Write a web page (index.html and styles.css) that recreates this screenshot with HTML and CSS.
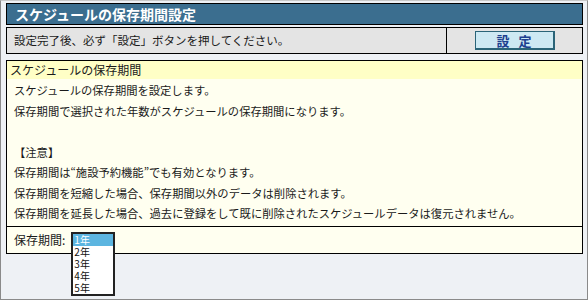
FILE: index.html
```html
<!DOCTYPE html>
<html lang="ja">
<head>
<meta charset="utf-8">
<title>スケジュールの保存期間設定</title>
<link rel="stylesheet" href="styles.css">
</head>
<body>
<div class="page">
  <h1 class="title">スケジュールの保存期間設定</h1>
  <div class="actionbar">
    <div class="note">設定完了後、必ず「設定」ボタンを押してください。</div>
    <div class="btncell"><button class="btn">設 定</button></div>
  </div>
  <div class="section">
    <div class="section-head">スケジュールの保存期間</div>
    <div class="section-body">
      <p>スケジュールの保存期間を設定します。</p>
      <p>保存期間で選択された年数がスケジュールの保存期間になります。</p>
      <p>&nbsp;</p>
      <p>【注意】</p>
      <p>保存期間は“施設予約機能”でも有効となります。</p>
      <p>保存期間を短縮した場合、保存期間以外のデータは削除されます。</p>
      <p>保存期間を延長した場合、過去に登録をして既に削除されたスケジュールデータは復元されません。</p>
    </div>
    <div class="section-foot">
      <span class="label">保存期間:</span>
      <div class="select-wrap">
        <ul class="listbox">
          <li class="selected">1年</li>
          <li>2年</li>
          <li>3年</li>
          <li>4年</li>
          <li>5年</li>
        </ul>
      </div>
    </div>
  </div>
</div>
</body>
</html>
```
FILE: styles.css
```css
html, body {
  margin: 0;
  padding: 0;
}
body {
  font-family: "Noto Sans CJK JP", "Noto Sans", sans-serif;
  font-size: 12px;
  color: #1a1a1a;
}
.page {
  box-sizing: border-box;
  width: 588px;
  height: 300px;
  background: #eef1f5;
  border-left: 1px solid #8a8a8a;
  border-right: 1px solid #8a8a8a;
  border-bottom: 1px solid #8a8a8a;
  border-top: 1px solid #c8c8c8;
  padding: 2px 4px 0 5px;
}
.title {
  margin: 0;
  box-sizing: border-box;
  height: 22px;
  border: 1px solid #000;
  background: #3b6e8f;
  color: #fff;
  font-size: 14px;
  font-weight: bold;
  line-height: 20px;
  padding-left: 8px;
}
.actionbar {
  margin-top: 2px;
  box-sizing: border-box;
  height: 27px;
  border: 1px solid #000;
  background: #e4e4e4;
  display: grid;
  grid-template-columns: 1fr 136px;
}
.note {
  padding-left: 7px;
  line-height: 25px;
  font-size: 11.5px;
}
.btncell {
  border-left: 1px solid #000;
  display: flex;
  align-items: center;
  justify-content: center;
}
.btn {
  box-sizing: border-box;
  width: 80px;
  height: 19px;
  margin: 0;
  padding: 0 0 0 3px;
  border: 1px solid #2a6478;
  border-right-width: 2px;
  border-bottom-width: 2px;
  background: #cde9f3;
  color: #1d3f8f;
  font-family: inherit;
  font-size: 13px;
  font-weight: bold;
  line-height: 15px;
  letter-spacing: 3px;
}
.section {
  margin-top: 6px;
  border: 1px solid #000;
  background: #fffff0;
}
.section-head {
  height: 18px;
  line-height: 18px;
  background: #ffffc6;
  padding-left: 3px;
  font-size: 12px;
}
.section-body {
  padding: 1px 7px 2px;
  border-bottom: 1px solid #000;
}
.section-body p {
  margin: 0;
  line-height: 20.5px;
  white-space: nowrap;
  font-size: 11.3px;
}
.section-foot {
  height: 26px;
  display: flex;
  align-items: center;
  padding-left: 7px;
}
.label {
  font-size: 12px;
}
.select-wrap {
  position: relative;
  width: 44px;
  height: 18px;
  margin-left: 6px;
}
.listbox {
  position: absolute;
  top: 1px;
  left: 0;
  margin: 0;
  padding: 0;
  list-style: none;
  box-sizing: border-box;
  width: 44px;
  border: 2px solid #222;
  background: #fff;
  z-index: 2;
}
.listbox li {
  height: 12px;
  line-height: 12px;
  font-size: 10px;
  padding-left: 1px;
  color: #111;
}
.listbox li.selected {
  background: #5cb5e0;
  color: #fff;
}
```
